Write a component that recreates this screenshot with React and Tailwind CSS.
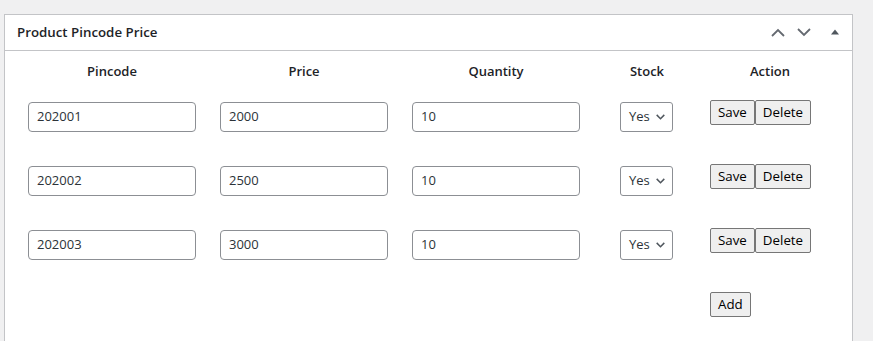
import React from "react";

const rows = [
  { pin: "202001", price: "2000", qty: "10" },
  { pin: "202002", price: "2500", qty: "10" },
  { pin: "202003", price: "3000", qty: "10" },
];

function Chevron({ up }) {
  return (
    <svg width="14" height="9" viewBox="0 0 14 9" fill="none">
      <path
        d={up ? "M1 8 L7 2 L13 8" : "M1 1 L7 7 L13 1"}
        stroke="#646970"
        strokeWidth="1.8"
      />
    </svg>
  );
}

function Field({ value }) {
  return (
    <div className="ml-2 mt-[9px] flex h-[30px] w-[168px] items-center rounded-[4px] border border-[#8c8f94] bg-white pl-2 text-[13px] text-[#2c3338]">
      {value}
    </div>
  );
}

function Btn({ children }) {
  return (
    <div className="flex h-[25px] items-center rounded-[2px] border border-[#767676] bg-[#efefef] px-[7px] text-[13.33px] text-black">
      {children}
    </div>
  );
}

export default function App() {
  return (
    <div
      className="h-[341px] overflow-hidden bg-[#f0f0f1] pl-[4px] pt-[14px]"
      style={{ fontFamily: '"Open Sans", "Noto Sans", sans-serif' }}
    >
      <div className="h-[327px] w-[849px] border-x border-t border-[#c3c4c7] bg-white">
        <div className="flex h-[36px] items-center border-b border-[#c3c4c7] pl-3 pr-[13px]">
          <div className="flex-1 text-[13.3px] font-semibold text-[#1d2327]">
            Product Pincode Price
          </div>
          <div className="flex items-center">
            <Chevron up />
            <div className="ml-3">
              <Chevron />
            </div>
            <svg width="8" height="6" viewBox="0 0 8 6" className="ml-[20px] mt-[-1px]">
              <path d="M0 5.5 L4 0.5 L8 5.5 Z" fill="#50575e" />
            </svg>
          </div>
        </div>

        <div className="flex h-[42px] items-center pl-[15px] text-[13px] font-semibold text-[#1d2327]">
          <div className="w-[184px] text-center">Pincode</div>
          <div className="ml-2 w-[184px] text-center">Price</div>
          <div className="ml-2 w-[184px] text-center">Quantity</div>
          <div className="ml-6 w-[70px] text-center">Stock</div>
          <div className="ml-5 w-[136px] text-center">Action</div>
        </div>

        {rows.map((r) => (
          <div key={r.pin} className="flex h-[64px] items-start pl-[15px]">
            <div className="w-[184px]">
              <Field value={r.pin} />
            </div>
            <div className="ml-2 w-[184px]">
              <Field value={r.price} />
            </div>
            <div className="ml-2 w-[184px]">
              <Field value={r.qty} />
            </div>
            <div className="ml-6 w-[70px]">
              <div className="ml-2 mt-[9px] flex h-[30px] w-[53px] items-center rounded-[3px] border border-[#8c8f94] bg-white pl-2 text-[13px] text-[#2c3338]">
                <span>Yes</span>
                <svg width="9" height="6" viewBox="0 0 9 6" className="ml-[6px]" fill="none">
                  <path d="M0.7 0.9 L4.5 4.7 L8.3 0.9" stroke="#50575e" strokeWidth="1.5" />
                </svg>
              </div>
            </div>
            <div className="ml-5 w-[136px]">
              <div className="ml-2 mt-[7px] flex">
                <Btn>Save</Btn>
                <Btn>Delete</Btn>
              </div>
            </div>
          </div>
        ))}

        <div className="flex pl-[15px]">
          <div className="ml-[690px] mt-[7px] flex">
            <Btn>Add</Btn>
          </div>
        </div>
      </div>
    </div>
  );
}
